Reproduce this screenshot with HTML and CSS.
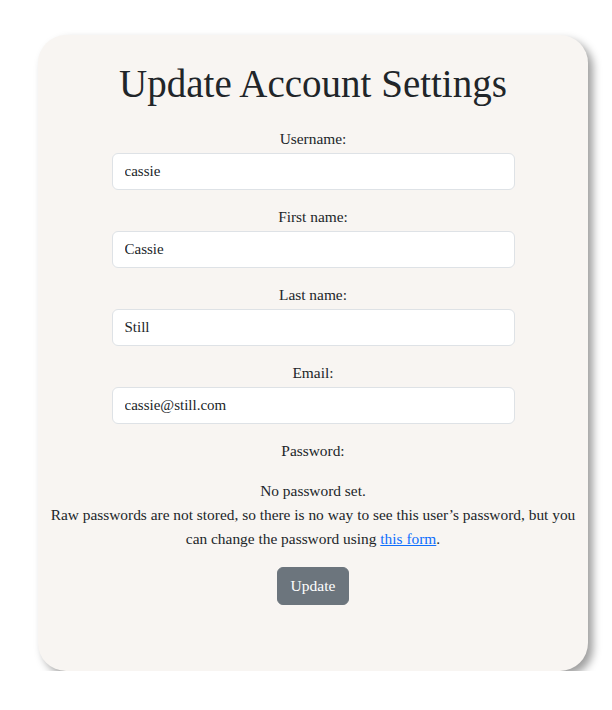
FILE: index.html
```html
<!DOCTYPE html>
<html lang="en">
<head>
<meta charset="utf-8">
<title>Update Account Settings</title>
<link rel="stylesheet" href="styles.css">
</head>
<body>
  <main class="card">
    <h1 class="title">Update Account Settings</h1>
    <form class="form">
      <div class="field">
        <label class="label" for="username">Username:</label>
        <input class="input" id="username" type="text" value="cassie">
      </div>
      <div class="field">
        <label class="label" for="first">First name:</label>
        <input class="input" id="first" type="text" value="Cassie">
      </div>
      <div class="field">
        <label class="label" for="last">Last name:</label>
        <input class="input" id="last" type="text" value="Still">
      </div>
      <div class="field">
        <label class="label" for="email">Email:</label>
        <input class="input" id="email" type="email" value="cassie@still.com">
      </div>
      <div class="field password">
        <div class="label">Password:</div>
        <p class="help">No password set.<br>Raw passwords are not stored, so there is no way to see this user’s password, but you can change the password using <a href="#" class="link">this form</a>.</p>
      </div>
      <button class="btn" type="button">Update</button>
    </form>
  </main>
</body>
</html>
```
FILE: styles.css
```css
html, body {
  margin: 0;
  padding: 0;
  background: #ffffff;
}

body {
  font-family: "Liberation Serif", "Times New Roman", serif;
  font-size: 15.4px;
  line-height: 24px;
  color: #212529;
}

.card {
  box-sizing: border-box;
  width: 550px;
  height: 636px;
  margin: 35px 0 0 38px;
  padding: 26px 8px 0;
  background: #f8f5f2;
  border-radius: 28px;
  box-shadow: 5px 5px 8px rgba(0, 0, 0, 0.38);
  text-align: center;
}

.title {
  margin: 0 0 20px;
  font-size: 39px;
  line-height: 46px;
  font-weight: 400;
  color: #212529;
}

.form {
  display: flex;
  flex-direction: column;
  align-items: center;
}

.field {
  display: flex;
  flex-direction: column;
  align-items: center;
  margin-bottom: 15px;
}

.label {
  display: block;
  margin-bottom: 2px;
  line-height: 24px;
}

.input {
  box-sizing: border-box;
  width: 403px;
  height: 37px;
  padding: 0 12px;
  margin: 0;
  border: 1px solid #dee2e6;
  border-radius: 6px;
  background: #ffffff;
  font-family: inherit;
  font-size: 15px;
  color: #212529;
  text-align: left;
  outline: none;
}

.password .label {
  margin-bottom: 16px;
}

.help {
  margin: 0;
  width: 534px;
  line-height: 24px;
}

.link {
  color: #0d6efd;
  text-decoration: underline;
}

.btn {
  box-sizing: border-box;
  width: 72px;
  height: 37.5px;
  margin-top: 1px;
  padding: 0;
  border: 1px solid #6c757d;
  border-radius: 6px;
  background: #6c757d;
  color: #ffffff;
  font-family: inherit;
  font-size: 15.5px;
  line-height: 24px;
}
```
